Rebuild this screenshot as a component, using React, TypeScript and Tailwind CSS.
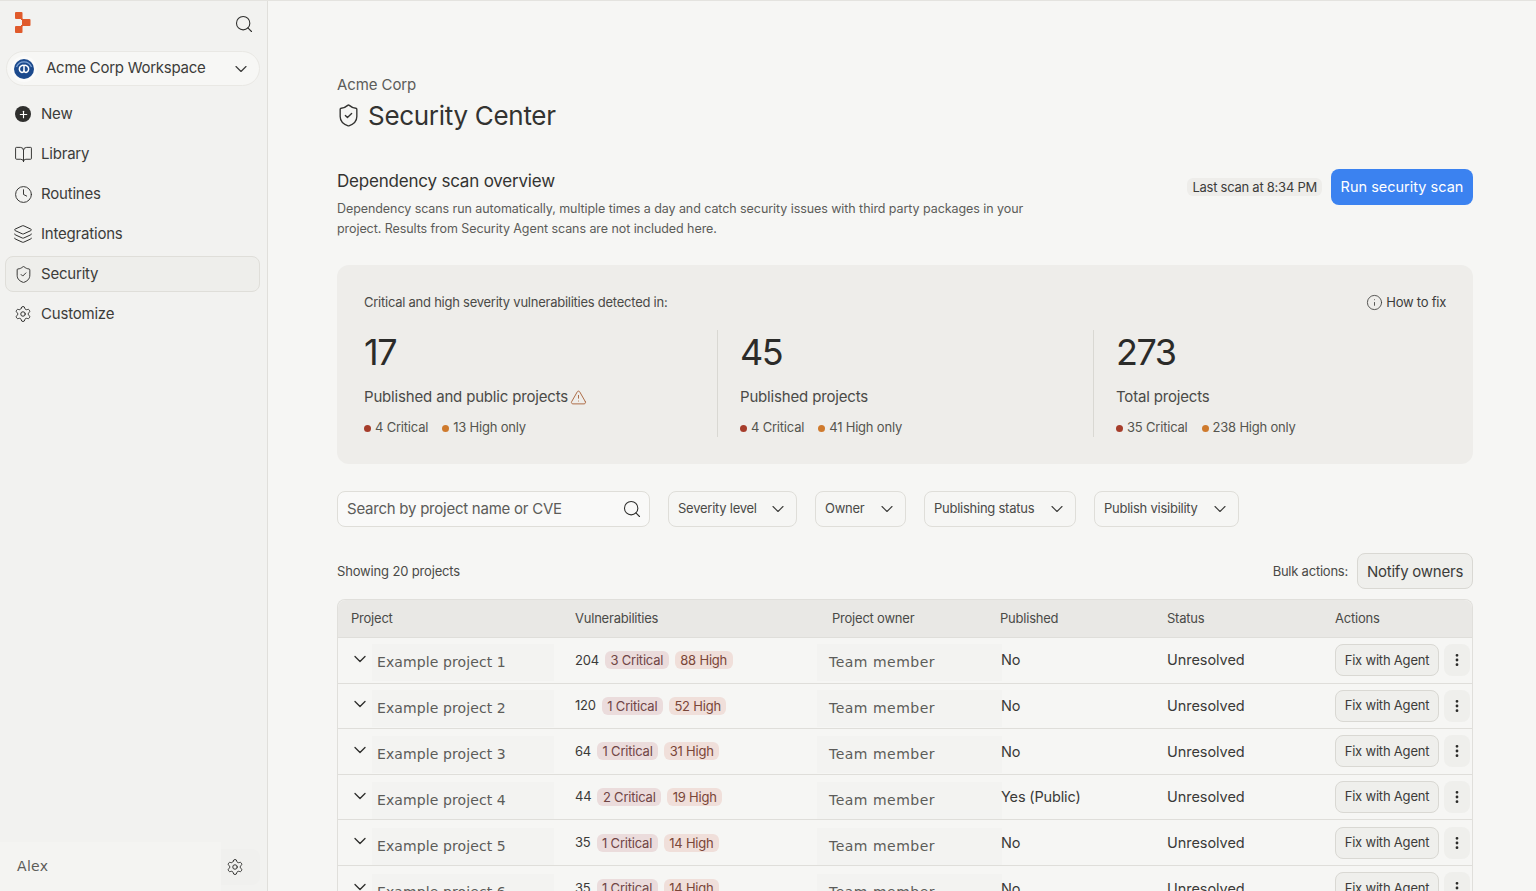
import React from "react";
import { Search, ChevronDown, BookOpen, Clock, Layers, ShieldCheck, Settings, Info, TriangleAlert, MoreVertical, Plus } from "lucide-react";

const Logo = () => (
  <svg width="16" height="21" viewBox="0 0 16 21" className="shrink-0">
    <rect x="0" y="0" width="7.500" height="7" rx="1" fill="#e05a2b" />
    <rect x="7" y="7" width="8.500" height="7" rx="1" fill="#e05a2b" />
    <rect x="0" y="14" width="7.500" height="7" rx="1" fill="#e05a2b" />
    <path d="M6 6.500h2v1.500h-2zM6 13h2v1.500h-2z" fill="#e05a2b" />
  </svg>
);

const WorkspaceAvatar = () => (
  <svg width="26" height="26" viewBox="0 0 26 26" className="shrink-0">
    <circle cx="13" cy="13" r="13" fill="#fbfbfa" />
    <circle cx="13" cy="13" r="10" fill="#1c4a8d" />
    <path d="M5.500 11a8 8 0 0 1 15 0" fill="none" stroke="#7fa3d4" strokeWidth="1.200" />
    <path d="M13 9.500a3.600 3.600 0 1 0-2 7c2.500 0 2-3.500 2-7zM13 9.500a3.600 3.600 0 1 1 2 7c-2.500 0-2-3.500-2-7z" fill="none" stroke="#fff" strokeWidth="1.500" />
  </svg>
);

const NavItem = ({ icon, label, active }: { icon: React.ReactNode; label: string; active?: boolean }) => (
  <div className={`flex h-9 items-center gap-[9px] rounded-lg border px-[8px] text-[15px] tracking-[-0.2px] ${active ? "border-[#dfded9] bg-[#eeeeeb]" : "border-transparent"} text-[#3c3c3a]`}>
    <span className="flex w-[18px] shrink-0 justify-center text-[#2f2f2d]">{icon}</span>
    {label}
  </div>
);

const Stat = ({ n, label, crit, high, warn, last }: { n: string; label: string; crit: string; high: string; warn?: boolean; last?: boolean }) => (
  <div className="flex">
    <div className="w-[353px]">
      <div className="text-[36px] leading-[44px] tracking-[-1.500px] text-[#2b2b29]">{n}</div>
      <div className="mt-[12px] flex h-[22px] items-center gap-[2px] text-[15px] tracking-[-0.17px] text-[#4a4a47]">
        {label}
        {warn && <TriangleAlert size={17} strokeWidth={1.300} className="shrink-0 text-[#a8623a]" />}
      </div>
      <div className="mt-[10px] flex h-[20px] items-center text-[13px] tracking-[-0.2px] text-[#55554f]">
        <span className="mr-[4px] h-[7px] w-[7px] rounded-full bg-[#a63d2b]" />
        <span>{crit}</span>
        <span className="ml-[14px] mr-[4px] h-[7px] w-[7px] rounded-full bg-[#cf7a2d]" />
        <span>{high}</span>
      </div>
    </div>
    {!last && <div className="h-[107px] w-px bg-[#d9d8d3]" />}
  </div>
);

const Filter = ({ label, className }: { label: string; className: string }) => (
  <div className={`flex h-[36px] items-center justify-between rounded-lg border border-[#dfded9] bg-[#f6f6f4] pl-[9px] pr-[8px] text-[13px] tracking-[-0.25px] text-[#4a4a47] ${className}`}>
    {label}
    <ChevronDown size={20} strokeWidth={1.300} className="shrink-0 text-[#3c3c3a]" />
  </div>
);

const rows = [
  { name: "Example project 1", total: "204", crit: "3 Critical", high: "88 High", pub: "No" },
  { name: "Example project 2", total: "120", crit: "1 Critical", high: "52 High", pub: "No" },
  { name: "Example project 3", total: "64", crit: "1 Critical", high: "31 High", pub: "No" },
  { name: "Example project 4", total: "44", crit: "2 Critical", high: "19 High", pub: "Yes (Public)" },
  { name: "Example project 5", total: "35", crit: "1 Critical", high: "14 High", pub: "No" },
  { name: "Example project 6", total: "35", crit: "1 Critical", high: "14 High", pub: "No" },
];

const grid = "grid grid-cols-[224px_256px_168px_167px_168px_150px]";
const maskFont = "font-['DejaVu_Sans',sans-serif] text-[14px] text-[#5c5c59]";

const Row = ({ r, i }: { r: (typeof rows)[number]; i: number }) => (
  <div className={`${grid} h-[45.600px] shrink-0 items-center border-b border-[#dfdeda]`}>
    <div className="flex h-full items-center">
      <ChevronDown size={20} strokeWidth={1.600} className="mb-[3px] ml-[12px] shrink-0 text-[#2f2f2d]" />
      <div style={{ marginTop: 4 + i * 0.8 }} className={`ml-[2px] flex h-[37px] w-[182px] items-center bg-[#f3f3f1] pl-[5px] tracking-[0.1px] ${maskFont}`}>{r.name}</div>
    </div>
    <div className="flex items-center pl-[13px] text-[13px] tracking-[-0.2px] text-[#3a3a38]">
      <span>{r.total}</span>
      <span className="ml-[6px] rounded-[6px] bg-[#ebdcdc] px-[5.500px] leading-[18px] text-[#704545]">{r.crit}</span>
      <span className="ml-[6px] rounded-[6px] bg-[#f0dfda] px-[5.500px] leading-[18px] text-[#7a4638]">{r.high}</span>
    </div>
    <div className="relative flex h-full items-center">
      <div style={{ marginTop: 4 + i * 0.8 }} className={`-ml-[1px] flex h-[37px] w-[185px] shrink-0 items-center bg-[#f3f3f1] pl-[12px] tracking-[0.5px] ${maskFont}`}>Team member</div>
    </div>
    <div className="relative z-10 pl-[15px] text-[14.500px] tracking-[-0.15px] text-[#3a3a38]">{r.pub}</div>
    <div className="pl-[14px] text-[14.500px] tracking-[-0.05px] text-[#3a3a38]">Unresolved</div>
    <div className="flex items-center pl-[14px]">
      <div className="flex h-[32px] w-[104px] shrink-0 items-center justify-center rounded-lg border border-[#d9d8d3] bg-[#efefec] text-[13px] tracking-[-0.2px] text-[#3c3c3a]">Fix with Agent</div>
      <div className="ml-[5px] flex h-[32px] w-[26px] shrink-0 items-center justify-center rounded-lg bg-[#efefec] text-[#2b2b29]">
        <MoreVertical size={16} strokeWidth={2.200} />
      </div>
    </div>
  </div>
);

export default function App() {
  return (
    <div className="flex h-screen overflow-hidden border-t border-[#e4e3df] bg-[#f6f6f4] font-['Inter',sans-serif]">
      <aside className="flex h-full w-[268px] shrink-0 flex-col border-r border-[#e0dfdb] bg-[#f2f2f0]">
        <div className="flex h-[50px] items-center justify-between pl-[15px] pr-[13px]">
          <div className="-mt-[7px]"><Logo /></div>
          <Search size={20} strokeWidth={1.300} className="-mt-[4px] text-[#2f2f2d]" />
        </div>
        <div className="ml-[6px] mr-[7px] flex h-[35px] items-center justify-between rounded-full border border-[#e9e8e4] bg-[#f7f7f5] pl-[4px] pr-[8px] text-[15px] tracking-[-0.26px] text-[#3c3c3a]">
          <span className="flex items-center gap-[9px]"><WorkspaceAvatar />Acme Corp Workspace</span>
          <ChevronDown size={20} strokeWidth={1.400} />
        </div>
        <nav className="ml-[5px] mr-[7px] mt-[10px] flex flex-col gap-1">
          <NavItem label="New" icon={<span className="flex h-4 w-4 items-center justify-center rounded-full bg-[#2f2f2d] text-white"><Plus size={11} strokeWidth={2.500} /></span>} />
          <NavItem label="Library" icon={<BookOpen size={19} strokeWidth={1.200} className="shrink-0" />} />
          <NavItem label="Routines" icon={<Clock size={19} strokeWidth={1.200} className="shrink-0" />} />
          <NavItem label="Integrations" icon={<Layers size={20} strokeWidth={1.200} className="shrink-0" />} />
          <NavItem label="Security" active icon={<ShieldCheck size={19} strokeWidth={1.200} className="shrink-0" />} />
          <NavItem label="Customize" icon={<Settings size={18} strokeWidth={1.300} className="shrink-0" />} />
        </nav>
        <div className="mt-auto flex h-[49px] items-center">
          <div className={`flex h-full w-[221px] items-center bg-[#f4f4f2] pl-[17px] tracking-[0.3px] ${maskFont}`}>Alex</div>
          <div className="flex h-[36px] w-[39px] items-center rounded-r-lg bg-[#f0f0ee] pl-[4.500px] text-[#2f2f2d]">
            <Settings size={18} strokeWidth={1.300} />
          </div>
        </div>
      </aside>

      <main className="flex min-w-0 flex-1 flex-col overflow-hidden pl-[69px] pr-[63px] pt-[74px]">
        <div className="text-[15px] leading-[20px] tracking-[-0.1px] text-[#5c5c59]">Acme Corp</div>
        <div className="mt-[4px] flex h-[32px] items-center gap-[7px] text-[26px] tracking-[-0.3px] text-[#333331]">
          <ShieldCheck size={25} strokeWidth={1.300} className="-ml-[1px] shrink-0" />
          Security Center
        </div>

        <div className="mt-[38px] flex justify-between">
          <div className="w-[700px]">
            <div className="text-[17px] leading-[25px] tracking-[-0.2px] text-[#333331]">Dependency scan overview</div>
            <div className="mt-[5px] text-[12.500px] leading-[20px] tracking-[-0.07px] text-[#5c5c59]">Dependency scans run automatically, multiple times a day and catch security issues with third party packages in your project. Results from Security Agent scans are not included here.</div>
          </div>
          <div className="flex h-[36px] items-center gap-[9px]">
            <span className="rounded-md bg-[#eeedea] px-[5px] text-[13px] leading-[18px] tracking-[-0.25px] text-[#3c3c3a]">Last scan at 8:34 PM</span>
            <span className="flex h-[36px] w-[142px] items-center justify-center rounded-lg bg-[#3b82f0] text-[14.500px] text-white">Run security scan</span>
          </div>
        </div>

        <section className="mt-[26px] h-[199px] shrink-0 rounded-xl bg-[#eeedea] px-[27px] pt-[28px]">
          <div className="flex items-center justify-between text-[13px] leading-[18px] tracking-[-0.25px] text-[#4a4a47]">
            <span>Critical and high severity vulnerabilities detected in:</span>
            <span className="flex items-center gap-[3px] text-[#3c3c3a]"><Info size={17} strokeWidth={1.200} className="shrink-0" />How to fix</span>
          </div>
          <div className="mt-[19px] grid grid-cols-[376px_376px_1fr]">
            <Stat n="17" label="Published and public projects" crit="4 Critical" high="13 High only" warn />
            <Stat n="45" label="Published projects" crit="4 Critical" high="41 High only" />
            <Stat n="273" label="Total projects" crit="35 Critical" high="238 High only" last />
          </div>
        </section>

        <div className="mt-[27px] flex items-center gap-[18px]">
          <div className="flex h-[36px] w-[313px] items-center justify-between rounded-lg border border-[#dfded9] bg-[#f9f9f8] pl-[9px] pr-[7px] text-[15px] tracking-[-0.24px] text-[#5c5c59]">
            Search by project name or CVE
            <Search size={20} strokeWidth={1.300} className="shrink-0 text-[#2f2f2d]" />
          </div>
          <Filter label="Severity level" className="w-[129px]" />
          <Filter label="Owner" className="w-[91px]" />
          <Filter label="Publishing status" className="w-[152px]" />
          <Filter label="Publish visibility" className="w-[145px]" />
        </div>

        <div className="mt-[26px] flex h-[36px] items-center justify-between">
          <span className="mt-[2px] text-[13px] tracking-[-0.16px] text-[#4a4a47]">Showing 20 projects</span>
          <div className="flex items-center gap-[9px]">
            <span className="mt-[2px] text-[13px] tracking-[-0.23px] text-[#4a4a47]">Bulk actions:</span>
            <span className="flex h-[36px] w-[116px] items-center justify-center rounded-lg border border-[#d9d8d3] bg-[#efefec] pt-[2px] text-[15px] tracking-[-0.23px] text-[#3c3c3a]">Notify owners</span>
          </div>
        </div>

        <div className="mt-[10px] flex shrink-0 flex-col rounded-t-lg border-x border-t border-[#e0dfdb]">
          <div className={`${grid} h-[38px] shrink-0 items-center rounded-t-lg border-b border-[#dfdeda] bg-[#e9e8e5] text-[13px] tracking-[-0.22px] text-[#4a4a47]`}>
            <div className="pl-[13px]">Project</div>
            <div className="pl-[13px]">Vulnerabilities</div>
            <div className="pl-[14px]">Project owner</div>
            <div className="pl-[14px]">Published</div>
            <div className="pl-[14px]">Status</div>
            <div className="pl-[14px]">Actions</div>
          </div>
          {rows.map((r, i) => <Row key={r.name} r={r} i={i} />)}
        </div>
      </main>
    </div>
  );
}
